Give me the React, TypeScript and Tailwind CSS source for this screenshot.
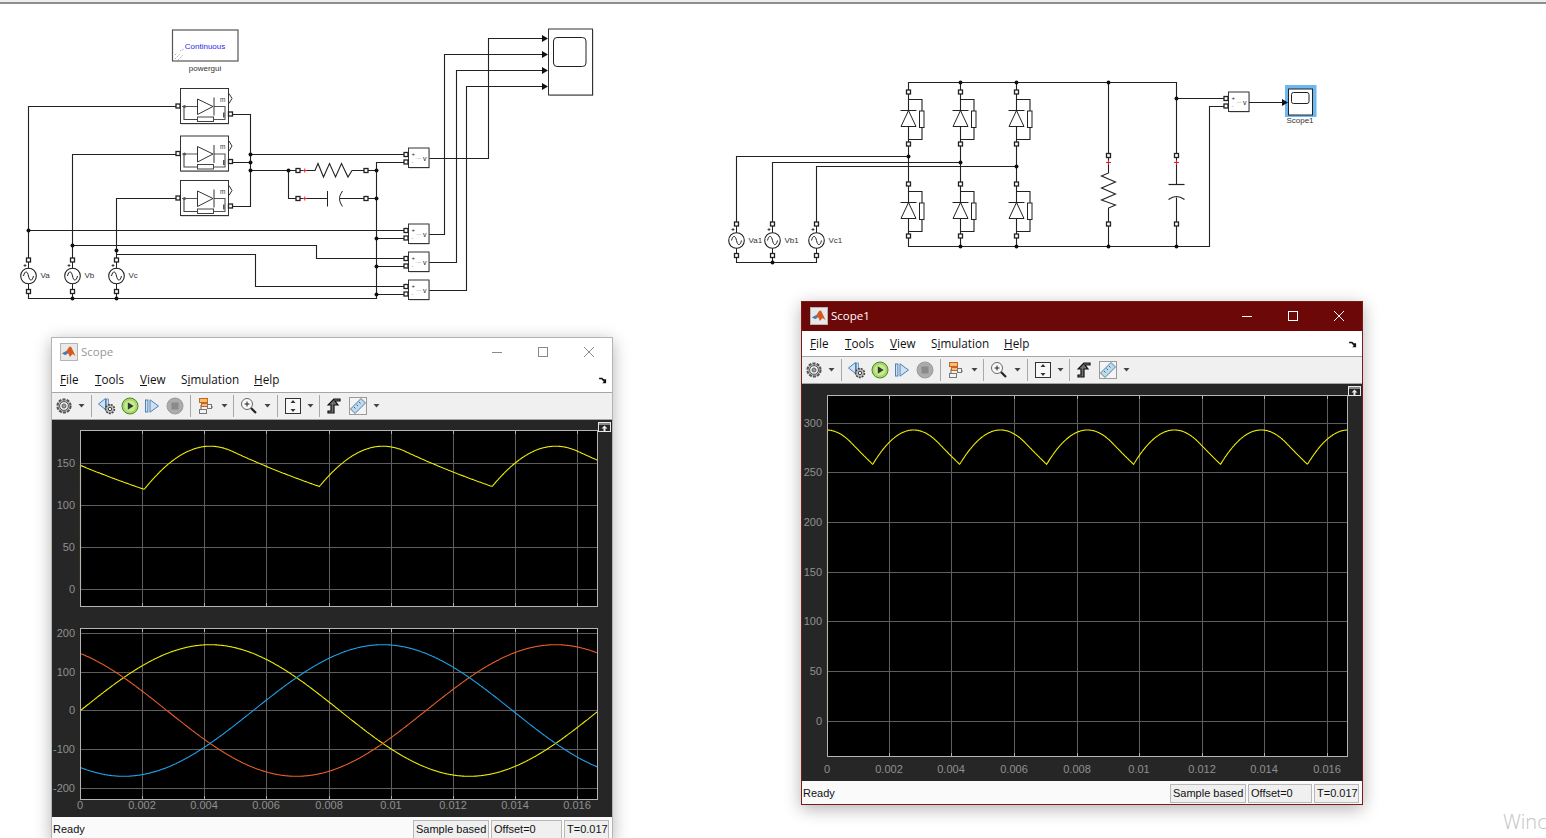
import React from 'react'

const W = (2 * Math.PI) / (1 / 60)

// simulated scope traces, drawn in page coordinates
function linePath(fn: (t: number) => number, x0: number, pxPerSec: number, y0: number, pxPerUnit: number, tEnd: number) {
  const pts: string[] = []
  for (let t = 0; t <= tEnd; t += 0.00002) {
    pts.push(`${(x0 + t * pxPerSec).toFixed(1)},${(y0 - fn(t) * pxPerUnit).toFixed(1)}`)
  }
  return 'M' + pts.join(' L')
}

const phase = (deg: number) => (t: number) => 170 * Math.sin(W * t + (deg * Math.PI) / 180)

function capacitorTrace(env: (t: number) => number, rc: number) {
  const step = 0.00002
  const vals: number[] = []
  let v = env(0)
  for (let t = 0; t <= 0.02; t += step) {
    v = Math.max(env(t), v * Math.exp(-step / rc))
    vals.push(v)
  }
  return (t: number) => vals[Math.min(vals.length - 1, Math.round(t / step))]
}

const halfWave = capacitorTrace(t => Math.max(phase(0)(t), phase(120)(t), phase(-120)(t)), 0.0095)
const fullWave = capacitorTrace(t => {
  let m = 0
  for (let k = 0; k < 6; k++) m = Math.max(m, 293 * Math.cos(W * (t + 0.00003) - (k * Math.PI) / 3))
  return m
}, 0.0085)

interface AxesProps {
  left: number
  top: number
  width: number
  height: number
  box: [number, number, number, number]
  xs: number[]
  yTicks: [string, number][]
  xLabels?: string[]
  xLabelY?: number
  traces: { color: string; d: string }[]
}

const Axes: React.FC<AxesProps> = ({ left, top, width, height, box, xs, yTicks, xLabels, xLabelY, traces }) => {
  const [l, t, r, b] = box
  return (
    <svg width={width} height={height} viewBox={`${left} ${top} ${width} ${height}`} className="block shrink-0">
      <rect x={l} y={t} width={r - l} height={b - t} fill="#000" />
      {xs.map(x => (
        <g key={x}>
          <line x1={x + 0.5} x2={x + 0.5} y1={t} y2={b} stroke="#5e5e5e" />
          <line x1={x + 0.5} x2={x + 0.5} y1={t} y2={t + 4} stroke="#b0b0b0" />
          <line x1={x + 0.5} x2={x + 0.5} y1={b - 4} y2={b} stroke="#b0b0b0" />
        </g>
      ))}
      {yTicks.map(([label, y]) => (
        <g key={label}>
          <line x1={l} x2={r} y1={y + 0.5} y2={y + 0.5} stroke="#5e5e5e" />
          <text x={l - 5} y={y + 4} textAnchor="end" fontSize="11" fill="#909090" fontFamily="'Liberation Sans', sans-serif">
            {label}
          </text>
        </g>
      ))}
      {traces.map(tr => (
        <path key={tr.color} d={tr.d} fill="none" stroke={tr.color} strokeWidth="1.1" />
      ))}
      <rect x={l + 0.5} y={t + 0.5} width={r - l - 1} height={b - t - 1} fill="none" stroke="#b4b4b4" />
      {xLabels?.map((label, i) => (
        <text key={label} x={xs[i] ?? l} y={xLabelY} textAnchor="middle" fontSize="11" fill="#909090" fontFamily="'Liberation Sans', sans-serif">
          {label}
        </text>
      ))}
    </svg>
  )
}

const MatlabIcon = () => (
  <svg width="18" height="18" viewBox="0 0 18 18">
    <rect x="0.5" y="0.5" width="17" height="17" fill="#e9e9e9" stroke="#b5b5b5" />
    <path d="M2 10.5 L6.5 8 L9 4 L11 3.5 L15.5 13 L12.5 11 L10 14 L8 10 L5.5 12 Z" fill="#d8591d" />
    <path d="M2 10.5 L6.5 8 L8 10 L5.5 12 Z" fill="#3f7fb8" />
  </svg>
)

const Drop = () => (
  <svg width="7" height="4" viewBox="0 0 7 4">
    <path d="M0.5 0 L6.5 0 L3.5 3.5 Z" fill="#444" />
  </svg>
)

const Gear = () => (
  <svg width="18" height="18" viewBox="0 0 18 18">
    <circle cx="9" cy="9" r="6.6" fill="#bcbcbc" stroke="#555" strokeWidth="2" strokeDasharray="3 1.2" />
    <circle cx="9" cy="9" r="4.4" fill="#ededed" stroke="#555" />
    <circle cx="9" cy="9" r="2" fill="#9a9a9a" stroke="#666" />
  </svg>
)

const BackStep = () => (
  <svg width="20" height="20" viewBox="0 0 20 20">
    <path d="M1.5 8 L8.5 2.5 L8.5 13.5 Z" fill="#cfe2f5" stroke="#4f7fb3" />
    <rect x="9.5" y="3" width="2" height="10" fill="#cfe2f5" stroke="#4f7fb3" strokeWidth="0.7" />
    <circle cx="13" cy="13" r="4.4" fill="#bdbdbd" stroke="#444" strokeWidth="1.6" strokeDasharray="2 1" />
    <circle cx="13" cy="13" r="1.7" fill="#f0f0f0" stroke="#444" />
  </svg>
)

const Play = () => (
  <svg width="18" height="18" viewBox="0 0 18 18">
    <circle cx="9" cy="9" r="8" fill="#a5d868" stroke="#4d8a22" />
    <circle cx="9" cy="9" r="5.6" fill="#c8ea97" />
    <path d="M6.8 5.2 L12.6 9 L6.8 12.8 Z" fill="#2f3a2a" />
  </svg>
)

const StepForward = () => (
  <svg width="16" height="16" viewBox="0 0 16 16">
    <rect x="1.5" y="2" width="2.4" height="12" fill="#cfe2f5" stroke="#4f7fb3" />
    <path d="M6 1.8 L14.5 8 L6 14.2 Z" fill="#cfe2f5" stroke="#4f7fb3" />
  </svg>
)

const Stop = () => (
  <svg width="18" height="18" viewBox="0 0 18 18">
    <circle cx="9" cy="9" r="8" fill="#ababab" stroke="#9c9c9c" />
    <rect x="5.5" y="5.5" width="7" height="7" fill="#8a8a8a" />
  </svg>
)

const BlockIcon = () => (
  <svg width="18" height="18" viewBox="0 0 18 18">
    <path d="M3 8 L3 16 M3 6 L9 6 M12 10 L15 10" stroke="#666" fill="none" />
    <rect x="1.5" y="1.5" width="8" height="4" fill="#f3bd7a" stroke="#c8641e" />
    <rect x="3.5" y="6.5" width="6" height="3" fill="#f3bd7a" stroke="#c8641e" />
    <rect x="9.5" y="7.5" width="4" height="4" fill="#f2f2f2" stroke="#777" />
    <rect x="1.5" y="12.5" width="7" height="4" fill="#f2f2f2" stroke="#777" />
  </svg>
)

const ZoomIcon = () => (
  <svg width="18" height="18" viewBox="0 0 18 18">
    <circle cx="7" cy="7" r="5.5" fill="#fafafa" stroke="#666" />
    <path d="M4.5 7 H9.5 M7 4.5 V9.5" stroke="#222" />
    <path d="M11 11 L16 16" stroke="#222" strokeWidth="2.2" />
  </svg>
)

const AutoScale = () => (
  <svg width="16" height="18" viewBox="0 0 16 18">
    <rect x="0.5" y="1.5" width="15" height="15" fill="#f8f8f8" stroke="#333" />
    <path d="M8 3 L5.5 6 H10.5 Z M8 15 L5.5 12 H10.5 Z" fill="#333" />
  </svg>
)

const SignalIcon = () => (
  <svg width="14" height="18" viewBox="0 0 14 18">
    <path d="M7 2 L1 8 H4 V14 H1 V16 H7 V8 H11 L8 4 H13 V2 Z" fill="#707070" stroke="#111" strokeWidth="1.2" />
  </svg>
)

const RulerIcon = () => (
  <svg width="18" height="18" viewBox="0 0 18 18">
    <rect x="0.5" y="0.5" width="17" height="17" fill="#f4f4f4" stroke="#9a9a9a" />
    <path d="M1.5 12 L12 1.5 L16.5 6 L6 16.5 Z" fill="#bcd9ee" stroke="#5a7f9c" />
    <path d="M5 10 L6.5 11.5 M7.5 7.5 L9 9 M10 5 L11.5 6.5" stroke="#45647e" />
  </svg>
)

const ToolSep = ({ className }: { className: string }) => (
  <div className={`flex justify-center ${className}`}>
    <div className="h-[22px] w-px bg-[#a8a8a8]" />
  </div>
)

const Tool = ({ className, children }: { className: string; children: React.ReactNode }) => (
  <div className={`flex items-center justify-center ${className}`}>{children}</div>
)

const Toolbar = () => (
  <div className="flex h-[27px] shrink-0 items-center border-b border-[#a6a6a6] bg-[#f0f0f0] pl-[1px]">
    <Tool className="w-[22px]"><Gear /></Tool>
    <Tool className="w-[12px]"><Drop /></Tool>
    <ToolSep className="w-[8px]" />
    <Tool className="w-[23px]"><BackStep /></Tool>
    <Tool className="w-[23px]"><Play /></Tool>
    <Tool className="w-[22px]"><StepForward /></Tool>
    <Tool className="w-[24px]"><Stop /></Tool>
    <ToolSep className="w-[6px]" />
    <Tool className="w-[28px]"><BlockIcon /></Tool>
    <Tool className="w-[7px]"><Drop /></Tool>
    <ToolSep className="w-[10px]" />
    <Tool className="w-[22px]"><ZoomIcon /></Tool>
    <Tool className="w-[14px]"><Drop /></Tool>
    <ToolSep className="w-[6px]" />
    <Tool className="w-[26px]"><AutoScale /></Tool>
    <Tool className="w-[8px]"><Drop /></Tool>
    <ToolSep className="w-[10px]" />
    <Tool className="w-[20px]"><SignalIcon /></Tool>
    <Tool className="w-[28px]"><RulerIcon /></Tool>
    <Tool className="w-[8px]"><Drop /></Tool>
  </div>
)

const Menu = () => (
  <div className="flex h-[26px] shrink-0 items-center border-b border-[#a6a6a6] bg-white pl-[8px] pr-[4px] pt-[1px] font-['Open_Sans',sans-serif] text-[11.7px] text-[#111]">
    <span className="w-[35px]"><span className="underline">F</span>ile</span>
    <span className="w-[45px]"><span className="underline">T</span>ools</span>
    <span className="w-[41px]"><span className="underline">V</span>iew</span>
    <span className="w-[73px]">S<span className="underline">i</span>mulation</span>
    <span><span className="underline">H</span>elp</span>
    <svg width="8" height="7" viewBox="0 0 10 9" className="ml-auto mr-[1px]">
      <path d="M0 1 L4 1 L6 3 L9 3 L9 8 L4 8 L6 6 L3 3 L0 3 Z" fill="#111" />
    </svg>
  </div>
)

const WinButton = ({ children }: { children: React.ReactNode }) => (
  <div className="flex h-full w-[46px] items-center justify-center">{children}</div>
)

interface WindowProps {
  title: string
  active?: boolean
  className: string
  offsetWidth: string
  children: React.ReactNode
}

const ScopeWindow: React.FC<WindowProps> = ({ title, active, className, offsetWidth, children }) => {
  const ctl = active ? '#fff' : '#8a8a8a'
  return (
    <div
      className={`absolute flex h-[504px] w-[562px] flex-col border shadow-[0_4px_16px_rgba(0,0,0,0.3)] ${
        active ? 'border-[#7c1a1a]' : 'border-[#b4b4b4]'
      } ${className}`}
    >
      <div className={`flex h-[29px] shrink-0 items-center pb-[2px] pl-[8px] ${active ? 'bg-[#6c0808] text-white' : 'bg-white text-[#999]'}`}>
        <MatlabIcon />
        <span className="ml-[3px] font-['Open_Sans',sans-serif] text-[11.5px]">{title}</span>
        <div className="ml-auto flex h-full">
          <WinButton>
            <svg width="10" height="10" viewBox="0 0 10 10"><path d="M0 5.5 H10" stroke={ctl} /></svg>
          </WinButton>
          <WinButton>
            <svg width="10" height="10" viewBox="0 0 10 10"><rect x="0.5" y="0.5" width="9" height="9" fill="none" stroke={ctl} /></svg>
          </WinButton>
          <WinButton>
            <svg width="10" height="10" viewBox="0 0 10 10"><path d="M0 0 L10 10 M10 0 L0 10" stroke={ctl} /></svg>
          </WinButton>
        </div>
      </div>
      <Menu />
      <Toolbar />
      <div className="relative flex h-[397px] shrink-0 flex-col bg-[#262626]">
        {children}
        <svg width="13" height="10" viewBox="0 0 13 10" className="absolute right-[1px] top-[2px]">
          <rect x="0.5" y="0.5" width="12" height="9" fill="#262626" stroke="#e8e8e8" />
          <path d="M1 2 H12" stroke="#e8e8e8" />
          <path d="M6.5 3.5 L9.5 6.5 H7.5 V9 H5.5 V6.5 H3.5 Z" fill="#e8e8e8" />
        </svg>
      </div>
      <div className="flex h-[23px] shrink-0 items-end gap-[2px] whitespace-nowrap bg-[#fafafa] pb-[1px] pr-[3px] font-['Liberation_Sans',sans-serif] text-[11px] text-[#111]">
        <span className="ml-[1px] mr-auto flex h-[19px] items-center">Ready</span>
        <span className="flex h-[19px] w-[76px] items-center border border-[#b8b8b8] bg-[#f0f0f0] pl-[2px]">Sample based</span>
        <span className={`flex h-[19px] items-center border border-[#b8b8b8] bg-[#f0f0f0] pl-[2px] ${offsetWidth}`}>Offset=0</span>
        <span className="flex h-[19px] w-[45px] items-center border border-[#b8b8b8] bg-[#f0f0f0] pl-[2px]">T=0.017</span>
      </div>
    </div>
  )
}

// simulink drawing helpers
const Port = ({ x, y }: { x: number; y: number }) => (
  <rect x={x - 2} y={y - 2} width="4" height="4" fill="#fff" stroke="#222" strokeWidth="1.3" />
)

const Dot = ({ x, y }: { x: number; y: number }) => <circle cx={x} cy={y} r="2" fill="#111" />

const Wire = ({ d, color = '#222' }: { d: string; color?: string }) => <path d={d} fill="none" stroke={color} strokeWidth="1.1" />

const Label = ({ x, y, children, anchor = 'start', size = 8, fill = '#333' }: { x: number; y: number; children: string; anchor?: 'start' | 'middle'; size?: number; fill?: string }) => (
  <text x={x} y={y} fontSize={size} fill={fill} textAnchor={anchor} fontFamily="'Liberation Sans', sans-serif">
    {children}
  </text>
)

const Voltmeter = ({ x, y }: { x: number; y: number }) => (
  <g>
    <rect x={x + 1} y={y + 1} width="20" height="19.5" fill="#bbb" />
    <rect x={x} y={y} width="20.5" height="19.5" fill="#fff" stroke="#333" />
    <Port x={x - 2.5} y={y + 6.5} />
    <Port x={x - 2.5} y={y + 14} />
    <Label x={x + 3} y={y + 8} size={6} fill="#222">+</Label>
    <Label x={x + 3} y={y + 16} size={6} fill="#888">-</Label>
    <path d={`M${x + 8} ${y + 10.5} H${x + 13}`} stroke="#ddd" />
    <Label x={x + 14.5} y={y + 12.5} size={7} fill="#222">v</Label>
  </g>
)

const Source = ({ x, y, label, top, bottom }: { x: number; y: number; label: string; top: number; bottom: number }) => (
  <g>
    <path d={`M${x} ${top} V${bottom}`} stroke="#222" />
    <circle cx={x} cy={y} r="7.8" fill="#fff" stroke="#222" strokeWidth="1.1" />
    <path d={`M${x - 5} ${y} C${x - 3.5} ${y - 6} ${x - 1} ${y - 5} ${x} ${y} S${x + 3.5} ${y + 6} ${x + 5} ${y}`} fill="none" stroke="#222" />
    <Port x={x} y={top} />
    <Port x={x} y={bottom} />
    <path d={`M${x - 5} ${top + 5.5} H${x - 2} M${x - 3.5} ${top + 4} V${top + 7}`} stroke="#222" strokeWidth="0.8" />
    <Label x={x + 12} y={y + 2}>{label}</Label>
  </g>
)

const DiodeBlock = ({ y }: { y: number }) => (
  <g>
    <rect x="181" y={y + 1} width="48" height="35" fill="#bbb" />
    <rect x="180.5" y={y} width="48" height="35" fill="#fff" stroke="#333" />
    <Port x={178} y={y + 17.5} />
    <Port x={230.5} y={y + 25.5} />
    <path d={`M229 ${y + 5} L232 ${y + 10} L229 ${y + 15}`} fill="#fff" stroke="#333" />
    <Label x={220} y={y + 13} size={6.5}>m</Label>
    <Wire d={`M182 ${y + 18} H197.5 M214 ${y + 18} H225 V${y + 31} H214`} color="#555" />
    <path d={`M197.5 ${y + 10.5} L213 ${y + 18} L197.5 ${y + 26} Z`} fill="#fff" stroke="#333" />
    <path d={`M214 ${y + 9} V${y + 27}`} stroke="#333" />
    <Wire d={`M184 ${y + 18} V${y + 31} H197`} color="#444" />
    <rect x="197.5" y={y + 28.5} width="16" height="4.5" fill="#fff" stroke="#444" />
    <rect x="223" y={y + 24} width="1.6" height="5" fill="#555" />
    <circle cx="184.5" cy={y + 18} r="1.5" fill="#555" />
  </g>
)

const LeftDiagram = () => (
  <svg width="620" height="330" viewBox="0 0 620 330" className="absolute left-0 top-0">
    <rect x="172.5" y="30" width="65.5" height="31" fill="#fff" stroke="#555" strokeWidth="1.2" />
    <Label x={205} y={49} anchor="middle" size={8} fill="#2a2ae8">Continuous</Label>
    <path d="M175 59 L180 54 M178 60 L183 55 M180 51 L184 49 M175 55 L177 53" stroke="#aaa" strokeDasharray="1.5 1" />
    <Label x={205} y={71} anchor="middle">powergui</Label>

    <Wire d="M177 106.5 H28.5 V258" />
    <Wire d="M177 154.5 H72.5 V258" />
    <Wire d="M177 198.5 H116.5 V258" />
    <Wire d="M232 114.5 H250.5 V206.5 H232 M232 162.5 H250.5" />
    <Wire d="M250.5 154.5 H405 M250.5 170.5 H296 M288.5 170.5 V198.5 H296" />
    <Wire d="M300 170.5 H315 L318 163.5 L323.5 177 L329.5 163.5 L335.5 177 L341.5 163.5 L348 177 L352 170.5 H364" />
    <Wire d="M300 198.5 H327.5 M339.5 198.5 H364" />
    <path d="M327.5 191 V206.5" stroke="#222" fill="none" />
    <path d="M342.5 191 C340 195 339.5 197 339.5 198.5 C339.5 200 340 203 342.5 206.5" stroke="#222" fill="none" />
    <Wire d="M368 170.5 H376.5 M368 198.5 H376.5 M405 162.5 H376.5 V298.5 H28.5 V293" />
    <Wire d="M28.5 230.5 H405 M72.5 245.5 H316.5 V258.5 H405 M116.5 254.5 H255.5 V286.5 H405" />
    <Wire d="M376.5 238.5 H405 M376.5 266.5 H405 M376.5 294.5 H405" />
    <Wire d="M72.5 293 V298 M116.5 293 V298" />

    <DiodeBlock y={88.5} />
    <DiodeBlock y={136} />
    <DiodeBlock y={180.5} />

    <Port x={298} y={170.5} />
    <Port x={298} y={198.5} />
    <Port x={366} y={170.5} />
    <Port x={366} y={198.5} />
    <path d="M302.5 170.5 H307 M304.8 168.5 V172.5 M302.5 198.5 H307 M304.8 196.5 V200.5" stroke="#e02020" />

    {[
      [250.5, 154.5], [250.5, 162.5], [250.5, 170.5], [288.5, 170.5], [376.5, 170.5], [376.5, 198.5],
      [376.5, 238.5], [376.5, 266.5], [376.5, 294.5], [28.5, 230.5], [72.5, 245.5], [116.5, 250.5],
      [72.5, 298.5], [116.5, 298.5],
    ].map(([x, y]) => <Dot key={`${x}-${y}`} x={x} y={y} />)}

    <Source x={28.5} y={276} label="Va" top={260} bottom={291.5} />
    <Source x={72.5} y={276} label="Vb" top={260} bottom={291.5} />
    <Source x={116.5} y={276} label="Vc" top={260} bottom={291.5} />

    <Wire d="M429 158.5 H488.5 V38.5 H543" />
    <Wire d="M429 234.5 H444.5 V54.5 H543" />
    <Wire d="M429 262.5 H456.5 V70.5 H543" />
    <Wire d="M429 290.5 H466.5 V86.5 H543" />
    <Voltmeter x={408.5} y={148} />
    <Voltmeter x={408.5} y={224} />
    <Voltmeter x={408.5} y={252} />
    <Voltmeter x={408.5} y={280} />

    {[38.5, 54.5, 70.5, 86.5].map(y => (
      <path key={y} d={`M542 ${y - 3.5} L548 ${y} L542 ${y + 3.5} Z`} fill="#111" />
    ))}
    <rect x="549.5" y="30" width="44" height="66" fill="#bbb" />
    <rect x="548.5" y="29" width="44" height="66" fill="#fff" stroke="#333" />
    <rect x="553.5" y="37.5" width="32.5" height="29" rx="3.5" fill="#fff" stroke="#222" />
  </svg>
)

const Thyristor = ({ x, y }: { x: number; y: number }) => (
  <g>
    <Wire d={`M${x} ${y} V${y + 52} M${x} ${y + 7.5} H${x + 13.5} V${y + 47.5} H${x}`} />
    <rect x={x + 11} y={y + 19} width="4.5" height="16.5" fill="#fff" stroke="#222" />
    <path d={`M${x} ${y + 18.5} L${x - 7.5} ${y + 34.5} H${x + 7.5} Z`} fill="#fff" stroke="#222" />
    <path d={`M${x - 8} ${y + 18.5} H${x + 8}`} stroke="#222" />
    <Port x={x} y={y} />
    <Port x={x} y={y + 52} />
  </g>
)

const RightDiagram = () => (
  <svg width="620" height="210" viewBox="720 70 620 210" className="absolute left-[720px] top-[70px]">
    <Wire d="M908.5 92 V82.5 H1176.5 V155 M960.5 82.5 V92 M1016.5 82.5 V92 M1108.5 82.5 V155" />
    <Wire d="M908.5 144 V183.5 M960.5 144 V183.5 M1016.5 144 V183.5" />
    <Wire d="M908.5 235.5 V246.5 H1209.5 V106.5 H1225 M960.5 235.5 V246.5 M1016.5 235.5 V246.5 M1108.5 224 V246.5 M1176.5 224 V246.5" />
    <Wire d="M736.5 222 V156.5 H908.5 M772.5 222 V162.5 H960.5 M816.5 222 V166.5 H1016.5" />
    <Wire d="M736.5 257 V262.5 H816.5 V257 M772.5 257 V262.5" />
    {[908.5, 960.5, 1016.5].flatMap(x => [92, 184].map(y => <Thyristor key={`${x}-${y}`} x={x} y={y} />))}
    <Source x={736.5} y={240.5} label="Va1" top={224} bottom={255.5} />
    <Source x={772.5} y={240.5} label="Vb1" top={224} bottom={255.5} />
    <Source x={816.5} y={240.5} label="Vc1" top={224} bottom={255.5} />

    <Wire d="M1108.5 157 V173 L1101.5 176 L1115.5 182 L1101.5 188 L1115.5 194 L1101.5 200 L1115.5 205 L1108.5 208 V222" />
    <Wire d="M1176.5 157 V184 M1176.5 197.5 V222" />
    <path d="M1168.5 184.5 H1184.5" stroke="#222" strokeWidth="1.2" />
    <path d="M1168.5 199.5 C1172 197 1174 196.5 1176.5 196.5 S1181 197 1184.5 199.5" fill="none" stroke="#222" strokeWidth="1.2" />
    <Port x={1108.5} y={155.5} />
    <Port x={1108.5} y={224} />
    <Port x={1176.5} y={155.5} />
    <Port x={1176.5} y={224} />
    <path d="M1106 162.5 H1111 M1108.5 160 V165 M1174 162.5 H1179 M1176.5 160 V165" stroke="#e02020" />
    <Wire d="M1176.5 98.5 H1225" />

    {[
      [960.5, 82.5], [1016.5, 82.5], [1108.5, 82.5], [1176.5, 98.5], [908.5, 156.5], [960.5, 162.5], [1016.5, 166.5],
      [960.5, 246.5], [1016.5, 246.5], [1108.5, 246.5], [1176.5, 246.5], [772.5, 262.5],
    ].map(([x, y]) => <Dot key={`${x}-${y}`} x={x} y={y} />)}

    <Voltmeter x={1228.5} y={92} />
    <Wire d="M1249 102.5 H1282" />
    <rect x="1285" y="85" width="31.5" height="32" fill="#6cb8ef" />
    <rect x="1288.5" y="89" width="24" height="26" fill="#fff" stroke="#222" />
    <rect x="1291.5" y="92.5" width="17.5" height="11" rx="2" fill="#fff" stroke="#222" />
    <path d="M1282 99 L1288 102.5 L1282 106 Z" fill="#111" />
    <Label x={1300} y={123} anchor="middle">Scope1</Label>
  </svg>
)

const xLabels = ['0', '0.002', '0.004', '0.006', '0.008', '0.01', '0.012', '0.014', '0.016']
const scopeXs = [80, 142, 204, 266, 329, 391, 453, 515, 577]
const scope1Xs = [827, 889, 951, 1014, 1077, 1139, 1202, 1264, 1327]
const TEND = 0.01662

export default function App() {
  return (
    <div className="relative h-[838px] w-[1546px] overflow-hidden bg-white">
      <div className="h-[2px] bg-[#eeeeee]" />
      <div className="h-[2px] bg-[#8b8e92]" />
      <LeftDiagram />
      <RightDiagram />

      <ScopeWindow title="Scope" className="left-[51px] top-[337px]" offsetWidth="w-[71px]">
        <Axes
          left={52}
          top={420}
          width={560}
          height={197}
          box={[80, 430, 598, 607]}
          xs={scopeXs}
          yTicks={[['150', 463], ['100', 505], ['50', 547], ['0', 589]]}
          traces={[{ color: '#f0f000', d: `M80.5 589 V467 ${linePath(halfWave, 80.5, 31100, 589, 0.84, TEND).replace('M', 'L')}` }]}
        />
        <Axes
          left={52}
          top={617}
          width={560}
          height={200}
          box={[80, 628, 598, 800]}
          xs={scopeXs}
          yTicks={[['200', 633], ['100', 672], ['0', 710], ['-100', 749], ['-200', 788]]}
          xLabels={xLabels}
          xLabelY={809}
          traces={[
            { color: '#f0f000', d: linePath(phase(0), 80.5, 31100, 710.5, 0.387, TEND) },
            { color: '#e8602a', d: linePath(phase(120), 80.5, 31100, 710.5, 0.387, TEND) },
            { color: '#1fa4ec', d: linePath(phase(-120), 80.5, 31100, 710.5, 0.387, TEND) },
          ]}
        />
      </ScopeWindow>

      <ScopeWindow title="Scope1" active className="left-[801px] top-[301px]" offsetWidth="w-[64px]">
        <Axes
          left={802}
          top={384}
          width={560}
          height={397}
          box={[827, 395, 1348, 757]}
          xs={scope1Xs}
          yTicks={[['300', 423], ['250', 472], ['200', 522], ['150', 572], ['100', 621], ['50', 671], ['0', 721]]}
          xLabels={xLabels}
          xLabelY={773}
          traces={[{ color: '#f0f000', d: `M827.5 721 V430 ${linePath(fullWave, 827.5, 31300, 721, 0.9933, TEND).replace('M', 'L')}` }]}
        />
      </ScopeWindow>

      <span className="absolute left-[1503px] top-[807px] font-['Open_Sans',sans-serif] text-[20px] font-light text-[#c4c4c4]">Winc</span>
    </div>
  )
}
